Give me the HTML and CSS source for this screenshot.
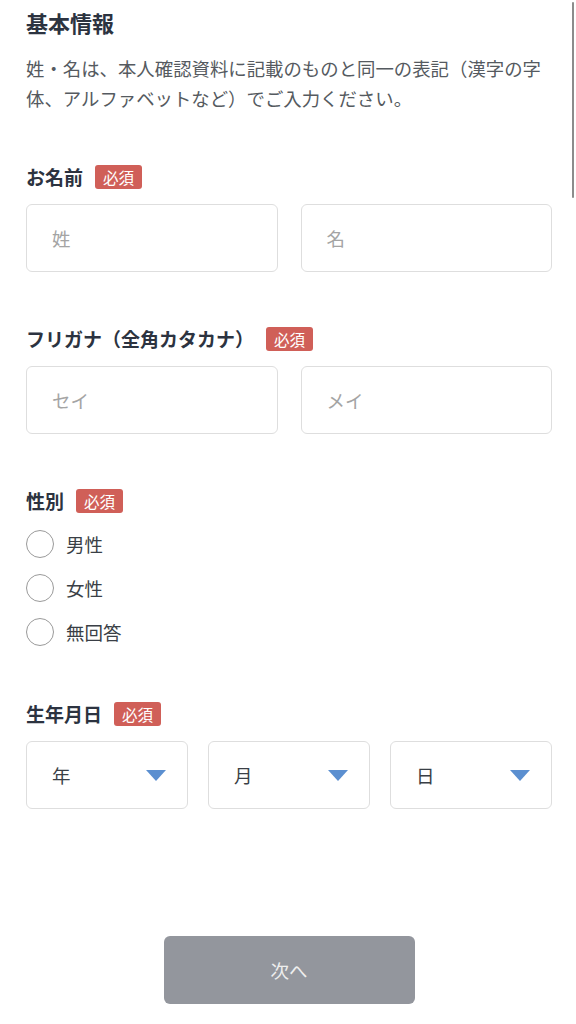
FILE: index.html
```html
<!DOCTYPE html>
<html lang="ja">
<head>
<meta charset="utf-8">
<title>基本情報</title>
<link rel="stylesheet" href="styles.css">
</head>
<body>
<div class="scrollbar"></div>
<main class="page">
  <h1 class="title">基本情報</h1>
  <p class="desc">姓・名は、本人確認資料に記載のものと同一の表記（漢字の字体、アルファベットなど）でご入力ください。</p>

  <section class="field field-first">
    <div class="label-row"><span class="label">お名前</span><span class="badge">必須</span></div>
    <div class="pair">
      <div class="input"><span class="ph">姓</span></div>
      <div class="input"><span class="ph">名</span></div>
    </div>
  </section>

  <section class="field">
    <div class="label-row"><span class="label">フリガナ（全角カタカナ）</span><span class="badge">必須</span></div>
    <div class="pair">
      <div class="input"><span class="ph">セイ</span></div>
      <div class="input"><span class="ph">メイ</span></div>
    </div>
  </section>

  <section class="field">
    <div class="label-row"><span class="label">性別</span><span class="badge">必須</span></div>
    <div class="radios">
      <div class="radio"><span class="circle"></span><span class="radio-text">男性</span></div>
      <div class="radio"><span class="circle"></span><span class="radio-text">女性</span></div>
      <div class="radio"><span class="circle"></span><span class="radio-text">無回答</span></div>
    </div>
  </section>

  <section class="field">
    <div class="label-row"><span class="label">生年月日</span><span class="badge">必須</span></div>
    <div class="triple">
      <div class="select"><span class="sel-text">年</span><svg class="caret" width="20" height="11" viewBox="0 0 20 11"><polygon points="0,0 20,0 10,11" fill="#5b8fd0"/></svg></div>
      <div class="select"><span class="sel-text">月</span><svg class="caret" width="20" height="11" viewBox="0 0 20 11"><polygon points="0,0 20,0 10,11" fill="#5b8fd0"/></svg></div>
      <div class="select"><span class="sel-text">日</span><svg class="caret" width="20" height="11" viewBox="0 0 20 11"><polygon points="0,0 20,0 10,11" fill="#5b8fd0"/></svg></div>
    </div>
  </section>

  <div class="actions">
    <button class="next" type="button">次へ</button>
  </div>
</main>
</body>
</html>
```

FILE: styles.css
```css
* { box-sizing: border-box; }
html, body { margin: 0; padding: 0; background: #ffffff; }
body {
  font-family: "Noto Sans CJK JP", "Noto Sans", sans-serif;
  color: #2c3340;
  width: 576px;
  height: 1024px;
  overflow: hidden;
  position: relative;
}
.scrollbar {
  position: absolute;
  right: 2px;
  top: 2px;
  width: 2px;
  height: 196px;
  border-radius: 1px;
  background: #8c8c8c;
}
.page {
  padding: 7px 24px 0 26px;
}
.title {
  margin: 0;
  font-size: 22px;
  line-height: 30px;
  font-weight: 700;
  color: #2c3340;
}
.desc {
  margin: 16px 0 0;
  font-size: 18.4px;
  line-height: 30px;
  color: #555a60;
}
.field { margin-top: 55px; }
.field-first { margin-top: 52px; }
.label-row {
  display: flex;
  align-items: center;
  gap: 12px;
  height: 24px;
}
.label {
  font-size: 19px;
  line-height: 24px;
  font-weight: 700;
  color: #2c3340;
}
.badge {
  display: flex;
  align-items: center;
  justify-content: center;
  width: 47px;
  height: 24px;
  border-radius: 3px;
  background: #d05f58;
  color: #ffffff;
  font-size: 15.5px;
  line-height: 24px;
}
.pair {
  margin-top: 15px;
  display: grid;
  grid-template-columns: 1fr 1fr;
  gap: 23px;
}
.input, .select {
  height: 68px;
  border: 1.5px solid #dedede;
  border-radius: 6px;
  display: flex;
  align-items: center;
  padding-left: 25px;
}
.ph {
  font-size: 18.5px;
  color: #a4a4a4;
}
.radios {
  margin-top: 16px;
  display: flex;
  flex-direction: column;
  gap: 14px;
}
.radio {
  display: flex;
  align-items: center;
  height: 30px;
  gap: 12px;
}
.circle {
  width: 28px;
  height: 28px;
  border-radius: 50%;
  border: 1.5px solid #9a9a9a;
  background: #fff;
}
.radio-text {
  font-size: 18.5px;
  color: #3a3f46;
}
.triple {
  margin-top: 15px;
  display: grid;
  grid-template-columns: 1fr 1fr 1fr;
  gap: 20px;
}
.select {
  justify-content: space-between;
  padding-right: 21px;
}
.sel-text {
  font-size: 18.5px;
  color: #3a3f46;
}
.caret { display: block; }
.actions {
  margin-top: 127px;
  display: flex;
  justify-content: center;
}
.next {
  width: 251px;
  height: 68px;
  border: none;
  border-radius: 6px;
  background: #93969d;
  color: #eeeeee;
  font-family: "Noto Sans CJK JP", "Noto Sans", sans-serif;
  font-size: 18.5px;
}
```
